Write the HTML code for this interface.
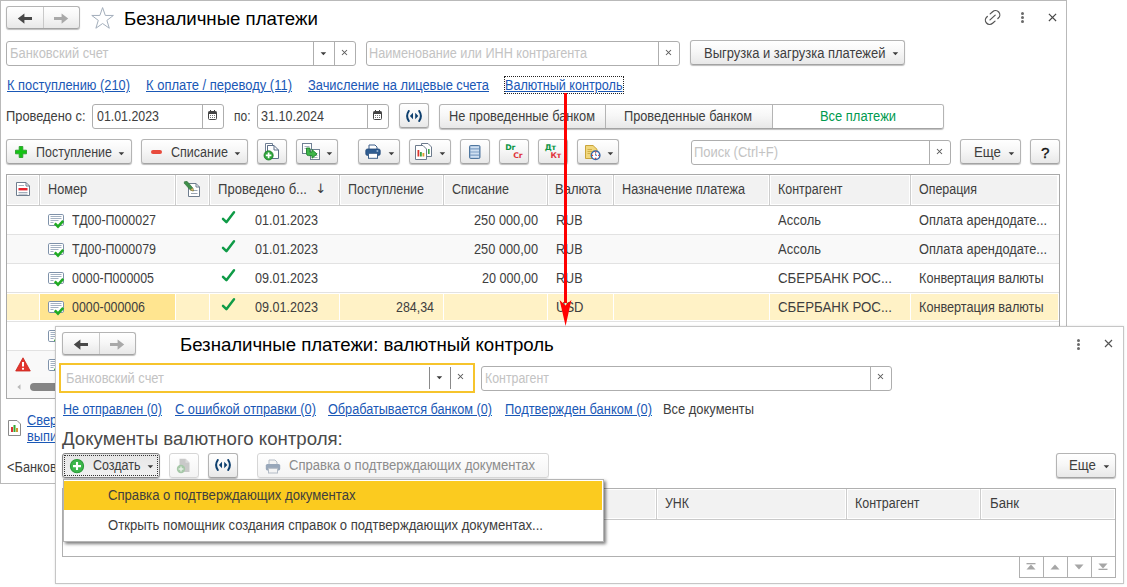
<!DOCTYPE html>
<html lang="ru"><head><meta charset="utf-8"><title>Безналичные платежи</title>
<style>
html,body{margin:0;padding:0}
body{width:1127px;height:587px;position:relative;overflow:hidden;background:#fff;font-family:"Liberation Sans",sans-serif;font-size:14px;color:#3e3e3e}
div,span.t,svg{position:absolute;box-sizing:border-box}
.t{white-space:nowrap;line-height:20px;transform-origin:0 50%}
.btn{border:1px solid #b4b4b4;border-bottom-color:#a3a3a3;border-radius:3px;background:linear-gradient(#fff 0%,#f7f7f7 45%,#e8e8e8 100%);box-shadow:0 1px 1px rgba(0,0,0,.26)}
.btn.dis{border-color:#d6d6d6;box-shadow:0 1px 0 rgba(0,0,0,.08);background:linear-gradient(#fff,#f3f3f3)}
.fld{border:1px solid #aeaeae;border-radius:3px;background:#fff}
.fld i{position:absolute;top:0;bottom:0;width:1px;background:#aeaeae}
.a{color:#1a58b6;text-decoration:underline}
.ph{color:#c3c3c3}
.win{background:#fff;border:1px solid #c4c4c4}
.hd{background:#f2f2f2}
.vl{background:#d9d9d9;width:1px}
.hl{background:#e3e3e3;height:1px}

</style></head>
<body>
<div style="left:0px;top:0px;width:1067px;height:484px;border:1px solid #b9b9b9;background:#fff"></div>
<div class="btn" style="left:6px;top:6px;width:74px;height:23px;"></div>
<div style="left:43px;top:7px;width:1px;height:21px;background:#c9c9c9"></div>
<svg style="left:17px;top:13px" width="16" height="12" viewBox="0 0 16 12"><path d="M0.8 5.6 L7.4 0.4 V4.1 H15 V7.1 H7.4 V10.8 Z" fill="#484848"/></svg>
<svg style="left:53px;top:13px" width="16" height="12" viewBox="0 0 16 12"><path d="M15.2 5.6 L8.6 0.4 V4.1 H1 V7.1 H8.600 V10.8 Z" fill="#a9a9a9"/></svg>
<svg style="left:89.700px;top:6.100px" width="25.200" height="24.230" viewBox="0 0 24 23.080"><path d="M12 1.500 L14.600 9 L22.300 9 L16.100 13.700 L18.400 21.200 L12 16.700 L5.600 21.200 L7.900 13.700 L1.700 9 L9.400 9 Z" fill="#fff" stroke="#a3aebb" stroke-width="0.95" stroke-linejoin="round"/></svg>
<span class="t" style="left:124px;top:9px;font-size:18.67px;color:#000;letter-spacing:-0.013px;">Безналичные платежи</span>
<svg style="left:982px;top:7px" width="21" height="21" viewBox="-10.5 -10.5 21 21" fill="none" stroke="#555" stroke-width="1.25" stroke-linecap="round"><g transform="translate(0.1,0) rotate(-42)"><path d="M0.600 -4.300 H3.900 A4.300 4.300 0 0 1 3.900 4.300 H3.200"/><path d="M-0.600 4.300 H-3.900 A4.300 4.300 0 0 1 -3.900 -4.300 H-3.200"/><path d="M-3.500 0 H3.500"/></g></svg>
<div style="left:1021px;top:12.0px;width:3px;height:3px;border-radius:50%;background:#6a6a6a"></div>
<div style="left:1021px;top:16.0px;width:3px;height:3px;border-radius:50%;background:#6a6a6a"></div>
<div style="left:1021px;top:20.0px;width:3px;height:3px;border-radius:50%;background:#6a6a6a"></div>
<svg style="left:1048px;top:13px" width="9" height="9" viewBox="0 0 9 9"><path d="M0.900 0.800 L8.1 8 M8.1 0.8 L0.9 8" stroke="#484848" stroke-width="1.15"/></svg>
<div class="fld" style="left:6px;top:41px;width:350px;height:25px;"><i style="left:306px"></i><i style="left:327px"></i></div>
<span class="t ph" style="left:10px;top:43px;transform:scaleX(0.9242);">Банковский счет</span>
<svg style="left:320px;top:52px" width="7" height="4" viewBox="0 0 7 4"><path d="M0.6 0.3 H6.2 L3.4 3.300 Z" fill="#3d3d3d"/></svg>
<svg style="left:341px;top:49px" width="7" height="7" viewBox="0 0 7 7"><path d="M1 1 L6 6 M6 1 L1 6" stroke="#5a5a5a" stroke-width="1.05"/></svg>
<div class="fld" style="left:366px;top:41px;width:314px;height:25px;"><i style="left:291px"></i></div>
<span class="t ph" style="left:369px;top:43px;transform:scaleX(0.9047);">Наименование или ИНН контрагента</span>
<svg style="left:665px;top:49px" width="7" height="7" viewBox="0 0 7 7"><path d="M1 1 L6 6 M6 1 L1 6" stroke="#5a5a5a" stroke-width="1.05"/></svg>
<div class="btn" style="left:690px;top:40px;width:215px;height:25px;"></div>
<span class="t" style="left:704px;top:43px;transform:scaleX(0.9264);">Выгрузка и загрузка платежей</span>
<svg style="left:892px;top:52px" width="7" height="4" viewBox="0 0 7 4"><path d="M0.6 0.3 H6.2 L3.4 3.300 Z" fill="#3d3d3d"/></svg>
<span class="t a" style="left:7px;top:75px;transform:scaleX(0.9169);">К поступлению (210)</span>
<span class="t a" style="left:146px;top:75px;transform:scaleX(0.9277);">К оплате / переводу (11)</span>
<span class="t a" style="left:308px;top:75px;transform:scaleX(0.9190);">Зачисление на лицевые счета</span>
<span class="t a" style="left:505px;top:75px;transform:scaleX(0.9015);">Валютный контроль</span>
<div style="left:504px;top:76px;width:120px;height:18px;border:1px dotted #222"></div>
<span class="t" style="left:6px;top:106px;transform:scaleX(0.9175);">Проведено с:</span>
<div class="fld" style="left:92px;top:104px;width:132px;height:25px;"><i style="left:109px"></i></div>
<span class="t" style="left:97px;top:106px;transform:scaleX(0.8848);">01.01.2023</span>
<div class="fld" style="left:257px;top:104px;width:132px;height:25px;"><i style="left:109px"></i></div>
<span class="t" style="left:234px;top:106px;transform:scaleX(0.8569);">по:</span>
<span class="t" style="left:261px;top:106px;transform:scaleX(0.8991);">31.10.2024</span>
<svg style="left:208px;top:110px" width="9" height="10" viewBox="0 0 9 10"><rect x="0.5" y="1.5" width="8" height="8" rx="1" fill="#fff" stroke="#444"/><rect x="0.5" y="1.5" width="8" height="2.5" fill="#444"/><path d="M2.5 0 V2 M6.5 0 V2" stroke="#444"/><path d="M2 5.5 H7 M2 7.5 H7" stroke="#777" stroke-dasharray="1 1"/></svg>
<svg style="left:373px;top:110px" width="9" height="10" viewBox="0 0 9 10"><rect x="0.5" y="1.5" width="8" height="8" rx="1" fill="#fff" stroke="#444"/><rect x="0.5" y="1.5" width="8" height="2.5" fill="#444"/><path d="M2.5 0 V2 M6.5 0 V2" stroke="#444"/><path d="M2 5.5 H7 M2 7.5 H7" stroke="#777" stroke-dasharray="1 1"/></svg>
<div class="btn" style="left:399px;top:103px;width:30px;height:25px;"></div>
<svg style="left:405px;top:110px" width="18" height="12" viewBox="0 0 18 12" fill="none" stroke="#0d3f6e" stroke-width="2" stroke-linecap="round"><path d="M3.8 1 Q0.4 6 3.8 11"/><path d="M14.2 1 Q17.6 6 14.200 11"/><path d="M8 2.7 V9.3 L4.9 6 Z M10.2 2.7 V9.3 L13.3 6 Z" fill="#0d3f6e" stroke="none"/></svg>
<div class="btn" style="left:439px;top:104px;width:505px;height:25px;"></div>
<div style="left:772px;top:105px;width:171px;height:23px;background:#fff;border-radius:0 2px 2px 0"></div>
<div style="left:605px;top:105px;width:1px;height:23px;background:#b4b4b4"></div>
<div style="left:772px;top:105px;width:1px;height:23px;background:#b4b4b4"></div>
<span class="t" style="left:449px;top:106px;transform:scaleX(0.9138);">Не проведенные банком</span>
<span class="t" style="left:624px;top:106px;transform:scaleX(0.9113);">Проведенные банком</span>
<span class="t" style="left:819.5px;top:106px;color:#009a4e;transform:scaleX(0.9233);">Все платежи</span>
<div class="btn" style="left:6px;top:139px;width:126px;height:25px;"></div>
<svg style="left:15px;top:146px" width="12" height="12" viewBox="0 0 12 12"><path d="M4.2 0.5 H7.8 V4.2 H11.5 V7.8 H7.8 V11.5 H4.2 V7.8 H0.5 V4.2 H4.2 Z" fill="#14c414" stroke="#2a9e2a" stroke-width="0.9"/></svg>
<span class="t" style="left:36px;top:142px;transform:scaleX(0.8910);">Поступление</span>
<svg style="left:118px;top:152px" width="7" height="4" viewBox="0 0 7 4"><path d="M0.6 0.3 H6.2 L3.4 3.300 Z" fill="#3d3d3d"/></svg>
<div class="btn" style="left:141px;top:139px;width:107px;height:25px;"></div>
<div style="left:151px;top:150px;width:11px;height:4px;background:#e84a3c;border-radius:2px"></div>
<span class="t" style="left:171px;top:142px;transform:scaleX(0.8957);">Списание</span>
<svg style="left:234px;top:152px" width="7" height="4" viewBox="0 0 7 4"><path d="M0.6 0.3 H6.2 L3.4 3.300 Z" fill="#3d3d3d"/></svg>
<div class="btn" style="left:257px;top:139px;width:30px;height:25px;"></div>
<div class="btn" style="left:296px;top:139px;width:42px;height:25px;"></div>
<svg style="left:326px;top:152px" width="7" height="4" viewBox="0 0 7 4"><path d="M0.6 0.3 H6.2 L3.4 3.300 Z" fill="#3d3d3d"/></svg>
<div class="btn" style="left:358px;top:139px;width:42px;height:25px;"></div>
<svg style="left:388px;top:152px" width="7" height="4" viewBox="0 0 7 4"><path d="M0.6 0.3 H6.2 L3.4 3.300 Z" fill="#3d3d3d"/></svg>
<div class="btn" style="left:409px;top:139px;width:42px;height:25px;"></div>
<svg style="left:439px;top:152px" width="7" height="4" viewBox="0 0 7 4"><path d="M0.6 0.3 H6.2 L3.4 3.300 Z" fill="#3d3d3d"/></svg>
<div class="btn" style="left:460px;top:139px;width:30px;height:25px;"></div>
<div class="btn" style="left:499px;top:139px;width:30px;height:25px;"></div>
<div class="btn" style="left:538px;top:139px;width:30px;height:25px;"></div>
<div class="btn" style="left:577px;top:139px;width:42px;height:25px;"></div>
<svg style="left:607px;top:152px" width="7" height="4" viewBox="0 0 7 4"><path d="M0.6 0.3 H6.2 L3.4 3.300 Z" fill="#3d3d3d"/></svg>
<div class="fld" style="left:691px;top:140px;width:260px;height:25px;"><i style="left:237px"></i></div>
<span class="t ph" style="left:694px;top:142px;transform:scaleX(0.9281);">Поиск (Ctrl+F)</span>
<svg style="left:936px;top:148px" width="7" height="7" viewBox="0 0 7 7"><path d="M1 1 L6 6 M6 1 L1 6" stroke="#5a5a5a" stroke-width="1.05"/></svg>
<div class="btn" style="left:960px;top:139px;width:61px;height:25px;"></div>
<span class="t" style="left:974px;top:142px;transform:scaleX(0.9478);">Еще</span>
<svg style="left:1008px;top:152px" width="7" height="4" viewBox="0 0 7 4"><path d="M0.6 0.3 H6.2 L3.4 3.300 Z" fill="#3d3d3d"/></svg>
<div class="btn" style="left:1030px;top:139px;width:30px;height:25px;"></div>
<span class="t" style="left:1041px;top:142.5px;font-size:15.2px;color:#111;-webkit-text-stroke:0.35px #111">?</span>
<svg style="left:263px;top:143px" width="17" height="18" viewBox="0 0 17 18"><path d="M2.5 0.5 H9.5 V3 H4.5 V13 H2.5 Z" fill="#fff" stroke="#6f7f93"/><path d="M4.5 2.5 H11 L15.5 7 V15.5 H4.5 Z" fill="#fff" stroke="#5c6f88"/><path d="M11 2.5 V7 H15.5" fill="none" stroke="#5c6f88"/><circle cx="5.6" cy="12.4" r="4.6" fill="#2ea63a" stroke="#187a25" stroke-width="0.8"/><path d="M5.6 9.6 V15.2 M2.8 12.4 H8.4" stroke="#fff" stroke-width="1.7"/></svg>
<svg style="left:302px;top:143px" width="18" height="17" viewBox="0 0 18 17"><rect x="0.5" y="0.5" width="9" height="10" fill="#fff" stroke="#6f7f93"/><path d="M2.5 3.5 H7.5 M2.5 5.5 H7.5" stroke="#a9b3bf"/><rect x="8.5" y="6.5" width="9" height="10" fill="#fff" stroke="#6f7f93"/><path d="M11 10.5 H15.500 M11 12.5 H15.5 M11 14.5 H15.5" stroke="#a9b3bf"/><path d="M4.5 5 H7.8 V9 H10 V6.6 L15 11 L10 15.2 V12.6 H6.5 Q4.5 12.6 4.5 10.6 Z" fill="#3fb54a" stroke="#1c7f2b" stroke-width="0.9" stroke-linejoin="round"/></svg>
<svg style="left:365px;top:144px" width="16" height="15" viewBox="0 0 16 15"><path d="M4 5 V1 H10 L12 3 V5" fill="#fff" stroke="#3c5f8a"/><rect x="0.8" y="5" width="14.4" height="6.4" rx="1.6" fill="#2f5d92" stroke="#244a78" stroke-width="0.8"/><rect x="3.5" y="9.3" width="9" height="5" fill="#fff" stroke="#3c5f8a"/><rect x="11.6" y="6.4" width="1.6" height="1.2" fill="#cfe0f2"/></svg>
<svg style="left:415px;top:143px" width="18" height="17" viewBox="0 0 18 17"><path d="M6.500 0.5 H13 L16.5 4 V13.5 H6.5 Z" fill="#fff" stroke="#6c7a8c"/><path d="M0.500 2.5 H8 L11.5 6 V16.5 H0.5 Z" fill="#fff" stroke="#6c7a8c"/><rect x="13" y="6" width="1.600" height="5" fill="#3aa444"/><rect x="2.5" y="7" width="1.800" height="6.500" fill="#d9342b"/><rect x="5" y="9" width="1.800" height="4.500" fill="#3aa444"/><rect x="7.500" y="10" width="1.800" height="3.500" fill="#e39b2d"/></svg>
<svg style="left:469px;top:145px" width="12" height="14" viewBox="0 0 12 14"><rect x="0.500" y="0.5" width="10.500" height="13" rx="1.200" fill="#7c9fc4" stroke="#50779f"/><path d="M1.500 2.300 H10 M1.5 5.400 H10 M1.5 8.600 H10 M1.5 11.700 H10" stroke="#cfe0f1" stroke-width="2"/></svg>
<span class="t" style="left:505.300px;top:140.300px;font:bold 7.800px/16px 'DejaVu Sans',sans-serif;color:#0b9443;letter-spacing:-0.150px">Dr</span>
<span class="t" style="left:513.300px;top:147.900px;font:bold 7.800px/16px 'DejaVu Sans',sans-serif;color:#e0333b;letter-spacing:-0.150px">Cr</span>
<span class="t" style="left:544.800px;top:140.300px;font:bold 7.800px/16px 'DejaVu Sans',sans-serif;color:#0b9443;letter-spacing:-0.200px">Дт</span>
<span class="t" style="left:550.600px;top:147.900px;font:bold 7.800px/16px 'DejaVu Sans',sans-serif;color:#e0333b;letter-spacing:-0.200px">Кт</span>
<svg style="left:584px;top:145px" width="18" height="16" viewBox="0 0 18 16"><path d="M1.500 0.5 H9 L13 4.300 V13.500 H1.5 Z" fill="#f1d77c" stroke="#c9a43a"/><path d="M3.500 4.500 H8 M3.5 6.500 H8 M3.5 8.500 H6.500" stroke="#c9a43a" stroke-width="0.8"/><circle cx="11.600" cy="10.300" r="4.300" fill="#fff" stroke="#3566a8" stroke-width="1.5"/><path d="M11.6 6.600 V7.800 M11.6 12.800 V14 M7.900 10.3 H9.100 M14.100 10.3 H15.300" stroke="#e03a30" stroke-width="1.3"/><path d="M11.6 8.300 V10.3 H13" fill="none" stroke="#3566a8" stroke-width="0.9"/></svg>
<div style="left:6px;top:174px;width:1054px;height:225px;border:1px solid #a9a9a9;background:#fff"></div>
<div style="left:8px;top:176px;width:1049px;height:28px;background:#f2f2f2"></div>
<div style="left:7px;top:205px;width:1052px;height:1px;background:#c9c9c9"></div>
<div style="left:38px;top:175px;width:3px;height:30px;background:#fff"></div>
<div style="left:39px;top:175px;width:1px;height:30px;background:#cdcdcd"></div>
<div style="left:174px;top:175px;width:3px;height:30px;background:#fff"></div>
<div style="left:175px;top:175px;width:1px;height:30px;background:#cdcdcd"></div>
<div style="left:208px;top:175px;width:3px;height:30px;background:#fff"></div>
<div style="left:209px;top:175px;width:1px;height:30px;background:#cdcdcd"></div>
<div style="left:338px;top:175px;width:3px;height:30px;background:#fff"></div>
<div style="left:339px;top:175px;width:1px;height:30px;background:#cdcdcd"></div>
<div style="left:442px;top:175px;width:3px;height:30px;background:#fff"></div>
<div style="left:443px;top:175px;width:1px;height:30px;background:#cdcdcd"></div>
<div style="left:546px;top:175px;width:3px;height:30px;background:#fff"></div>
<div style="left:547px;top:175px;width:1px;height:30px;background:#cdcdcd"></div>
<div style="left:612px;top:175px;width:3px;height:30px;background:#fff"></div>
<div style="left:613px;top:175px;width:1px;height:30px;background:#cdcdcd"></div>
<div style="left:768px;top:175px;width:3px;height:30px;background:#fff"></div>
<div style="left:769px;top:175px;width:1px;height:30px;background:#cdcdcd"></div>
<div style="left:909px;top:175px;width:3px;height:30px;background:#fff"></div>
<div style="left:910px;top:175px;width:1px;height:30px;background:#cdcdcd"></div>
<svg style="left:16px;top:182px" width="15" height="15" viewBox="0 0 15 15"><path d="M0.500 0.5 H10 L13.500 4 V13.500 H0.5 Z" fill="#fff" stroke="#6f7d8e"/><path d="M10 0.5 V4 H13.5" fill="none" stroke="#6f7d8e"/><path d="M2.500 3.500 H8 M2.5 10.500 H11.500 M2.5 12.200 H11.500" stroke="#9aa5b3" stroke-width="0.9"/><rect x="2.500" y="6" width="9" height="2.400" fill="#e8212b"/></svg>
<svg style="left:183px;top:181px" width="18" height="16" viewBox="0 0 18 16"><path d="M5.500 2.500 H13 L16.500 6 V15.500 H5.5 Z" fill="#fff" stroke="#6f7d8e"/><path d="M13 2.5 V6 H16.5" fill="none" stroke="#6f7d8e"/><path d="M8 9.500 H14.500 M8 12.500 H14.5" stroke="#9aa5b3"/><path d="M1.300 0.800 L4 0.300 L9.800 7 L10.300 10 L7.300 9 L1.300 2.300 Z" fill="#3f8f4a" stroke="#2c6c36" stroke-width="0.6"/><path d="M7.3 9 L10.3 10 L9.800 7 Z" fill="#f2c879" stroke="#9b7a3a" stroke-width="0.5"/></svg>
<span class="t" style="left:48px;top:179px;transform:scaleX(0.9050);">Номер</span>
<span class="t" style="left:218px;top:179px;transform:scaleX(0.9325);">Проведено б...</span>
<span class="t" style="left:315.3px;top:179px;font-size:13px;font-family:'DejaVu Sans',sans-serif">↓</span>
<span class="t" style="left:348px;top:179px;transform:scaleX(0.8910);">Поступление</span>
<span class="t" style="left:452px;top:179px;transform:scaleX(0.8957);">Списание</span>
<span class="t" style="left:555px;top:179px;transform:scaleX(0.9288);">Валюта</span>
<span class="t" style="left:622px;top:179px;transform:scaleX(0.9048);">Назначение платежа</span>
<span class="t" style="left:778px;top:179px;transform:scaleX(0.8910);">Контрагент</span>
<span class="t" style="left:919px;top:179px;transform:scaleX(0.8889);">Операция</span>
<div style="left:7px;top:206px;width:1052px;height:28px;background:#fff"></div>
<div style="left:7px;top:234px;width:1052px;height:1px;background:#e2e2e2"></div>
<svg style="left:48px;top:214px" width="17" height="15" viewBox="0 0 17 15"><rect x="0.5" y="0.5" width="15" height="11" rx="1.3" fill="#fff" stroke="#7f92aa"/><path d="M2.5 2.500 H13.5 M2.5 4.500 H13.5 M2.5 6.500 H10.5 M2.5 8.500 H5.500" stroke="#a3b1c2"/><path d="M6.800 9.300 L10 12.600 L15.2 6.900" fill="none" stroke="#1fab22" stroke-width="2.6"/></svg>
<span class="t" style="left:72px;top:210px;transform:scaleX(0.8881);">ТД00-П000027</span>
<svg style="left:221px;top:210px" width="16" height="15" viewBox="0 0 16 15"><path d="M2 8.800 L5.400 12.200 L13 2.300" fill="none" stroke="#0f9b47" stroke-width="2.500" stroke-linecap="round" stroke-linejoin="round"/></svg>
<span class="t" style="left:255px;top:210px;transform:scaleX(0.8991);">01.01.2023</span>
<span class="t" style="left:474px;top:210px;transform:scaleX(0.9134);">250 000,00</span>
<span class="t" style="left:555.5px;top:210px;transform:scaleX(0.8965);">RUB</span>
<span class="t" style="left:778px;top:210px;transform:scaleX(0.9260);">Ассоль</span>
<span class="t" style="left:919px;top:210px;transform:scaleX(0.9133);">Оплата арендодате...</span>
<div style="left:7px;top:235px;width:1052px;height:28px;background:#f9f9f9"></div>
<div style="left:7px;top:263px;width:1052px;height:1px;background:#e2e2e2"></div>
<svg style="left:48px;top:243px" width="17" height="15" viewBox="0 0 17 15"><rect x="0.5" y="0.5" width="15" height="11" rx="1.3" fill="#fff" stroke="#7f92aa"/><path d="M2.5 2.500 H13.5 M2.5 4.500 H13.5 M2.5 6.500 H10.5 M2.5 8.500 H5.500" stroke="#a3b1c2"/><path d="M6.800 9.300 L10 12.600 L15.2 6.900" fill="none" stroke="#1fab22" stroke-width="2.6"/></svg>
<span class="t" style="left:72px;top:239px;transform:scaleX(0.8881);">ТД00-П000079</span>
<svg style="left:221px;top:239px" width="16" height="15" viewBox="0 0 16 15"><path d="M2 8.800 L5.400 12.200 L13 2.300" fill="none" stroke="#0f9b47" stroke-width="2.500" stroke-linecap="round" stroke-linejoin="round"/></svg>
<span class="t" style="left:255px;top:239px;transform:scaleX(0.8991);">01.01.2023</span>
<span class="t" style="left:474px;top:239px;transform:scaleX(0.9134);">250 000,00</span>
<span class="t" style="left:555.5px;top:239px;transform:scaleX(0.8965);">RUB</span>
<span class="t" style="left:778px;top:239px;transform:scaleX(0.9260);">Ассоль</span>
<span class="t" style="left:919px;top:239px;transform:scaleX(0.9133);">Оплата арендодате...</span>
<div style="left:7px;top:264px;width:1052px;height:28px;background:#fff"></div>
<div style="left:7px;top:292px;width:1052px;height:1px;background:#e2e2e2"></div>
<svg style="left:48px;top:272px" width="17" height="15" viewBox="0 0 17 15"><rect x="0.5" y="0.5" width="15" height="11" rx="1.3" fill="#fff" stroke="#7f92aa"/><path d="M2.5 2.500 H13.5 M2.5 4.500 H13.5 M2.5 6.500 H10.5 M2.5 8.500 H5.500" stroke="#a3b1c2"/><path d="M6.800 9.300 L10 12.600 L15.2 6.900" fill="none" stroke="#1fab22" stroke-width="2.6"/></svg>
<span class="t" style="left:72px;top:268px;transform:scaleX(0.8856);">0000-П000005</span>
<svg style="left:221px;top:268px" width="16" height="15" viewBox="0 0 16 15"><path d="M2 8.800 L5.400 12.200 L13 2.300" fill="none" stroke="#0f9b47" stroke-width="2.500" stroke-linecap="round" stroke-linejoin="round"/></svg>
<span class="t" style="left:255px;top:268px;transform:scaleX(0.8991);">09.01.2023</span>
<span class="t" style="left:482px;top:268px;transform:scaleX(0.8991);">20 000,00</span>
<span class="t" style="left:555.5px;top:268px;transform:scaleX(0.8965);">RUB</span>
<span class="t" style="left:778px;top:268px;transform:scaleX(0.9496);">СБЕРБАНК РОС...</span>
<span class="t" style="left:919px;top:268px;transform:scaleX(0.9056);">Конвертация валюты</span>
<div style="left:7px;top:293px;width:1052px;height:28px;background:#f9f9f9"></div>
<div style="left:7px;top:321px;width:1052px;height:1px;background:#e2e2e2"></div>
<div style="left:7px;top:293px;width:1052px;height:28px;background:#fff"></div>
<div style="left:7px;top:294px;width:1051px;height:26px;background:#fff2c6"></div>
<div style="left:40px;top:294px;width:135px;height:26px;background:#ffe590"></div>
<div style="left:39px;top:294px;width:1px;height:26px;background:#fff"></div>
<div style="left:175px;top:294px;width:1px;height:26px;background:#fff"></div>
<div style="left:209px;top:294px;width:1px;height:26px;background:#fff"></div>
<div style="left:339px;top:294px;width:1px;height:26px;background:#fff"></div>
<div style="left:443px;top:294px;width:1px;height:26px;background:#fff"></div>
<div style="left:547px;top:294px;width:1px;height:26px;background:#fff"></div>
<div style="left:613px;top:294px;width:1px;height:26px;background:#fff"></div>
<div style="left:769px;top:294px;width:1px;height:26px;background:#fff"></div>
<div style="left:910px;top:294px;width:1px;height:26px;background:#fff"></div>
<svg style="left:48px;top:301px" width="17" height="15" viewBox="0 0 17 15"><rect x="0.5" y="0.5" width="15" height="11" rx="1.3" fill="#fff" stroke="#7f92aa"/><path d="M2.5 2.500 H13.5 M2.5 4.500 H13.5 M2.5 6.500 H10.5 M2.5 8.500 H5.500" stroke="#a3b1c2"/><path d="M6.800 9.300 L10 12.600 L15.2 6.900" fill="none" stroke="#1fab22" stroke-width="2.6"/></svg>
<span class="t" style="left:72px;top:297px;transform:scaleX(0.8846);">0000-000006</span>
<svg style="left:221px;top:297px" width="16" height="15" viewBox="0 0 16 15"><path d="M2 8.800 L5.400 12.200 L13 2.300" fill="none" stroke="#0f9b47" stroke-width="2.500" stroke-linecap="round" stroke-linejoin="round"/></svg>
<span class="t" style="left:255px;top:297px;transform:scaleX(0.8991);">09.01.2023</span>
<span class="t" style="left:396px;top:297px;transform:scaleX(0.8874);">284,34</span>
<span class="t" style="left:555.5px;top:297px;transform:scaleX(0.9303);">USD</span>
<span class="t" style="left:778px;top:297px;transform:scaleX(0.9496);">СБЕРБАНК РОС...</span>
<span class="t" style="left:919px;top:297px;transform:scaleX(0.9056);">Конвертация валюты</span>
<div style="left:7px;top:322px;width:1052px;height:28px;background:#fff"></div>
<div style="left:7px;top:350px;width:1052px;height:1px;background:#e2e2e2"></div>
<svg style="left:48px;top:330px" width="17" height="15" viewBox="0 0 17 15"><rect x="0.5" y="0.5" width="15" height="11" rx="1.3" fill="#fff" stroke="#7f92aa"/><path d="M2.5 2.500 H13.5 M2.5 4.500 H13.5 M2.5 6.500 H10.5 M2.5 8.500 H5.500" stroke="#a3b1c2"/><path d="M6.800 9.300 L10 12.600 L15.2 6.900" fill="none" stroke="#1fab22" stroke-width="2.6"/></svg>
<div style="left:7px;top:351px;width:1052px;height:26px;background:#f9f9f9"></div>
<svg style="left:48px;top:359px" width="17" height="15" viewBox="0 0 17 15"><rect x="0.5" y="0.5" width="15" height="11" rx="1.3" fill="#fff" stroke="#7f92aa"/><path d="M2.5 2.500 H13.5 M2.5 4.500 H13.5 M2.5 6.500 H10.5 M2.5 8.500 H5.500" stroke="#a3b1c2"/><path d="M6.800 9.300 L10 12.600 L15.2 6.900" fill="none" stroke="#1fab22" stroke-width="2.6"/></svg>
<svg style="left:15px;top:357px" width="16" height="15" viewBox="0 0 16 15"><path d="M8 0.8 L15.3 14 H0.7 Z" fill="#e2352d" stroke="#c9241d" stroke-width="0.8" stroke-linejoin="round"/><path d="M8 5 V9.6" stroke="#fff" stroke-width="2"/><circle cx="8" cy="11.8" r="1.1" fill="#fff"/></svg>
<div style="left:7px;top:377px;width:1052px;height:21px;background:#f8f8f8"></div>
<svg style="left:17px;top:384px" width="4" height="6" viewBox="0 0 4 6"><path d="M3.5 0.3 V5.7 L0.3 3 Z" fill="#b9b9b9"/></svg>
<div style="left:30px;top:383px;width:300px;height:8px;background:#858585;border-radius:4px"></div>
<svg style="left:8px;top:420px" width="13" height="16" viewBox="0 0 13 16"><path d="M0.5 0.5 H9 L12.5 4 V15.5 H0.5 Z" fill="#fff" stroke="#8a8a8a"/><rect x="3" y="7" width="2" height="5" fill="#d33"/><rect x="5.5" y="5" width="2" height="7" fill="#3a3"/><rect x="8" y="8" width="2" height="4" fill="#c93"/></svg>
<span class="t a" style="left:27px;top:410px;transform:scaleX(.915);">Сверка с банком</span>
<span class="t a" style="left:27px;top:426px;transform:scaleX(.915);">выписок банка</span>
<span class="t" style="left:7px;top:457px;transform:scaleX(.915);">&lt;Банковский счет не выбран&gt;</span>
<div style="left:564px;top:93px;width:3px;height:210px;background:#ff0000"></div>
<svg style="left:558px;top:298px" width="16" height="29" viewBox="0 0 16 29"><path d="M1.6 2 L7.5 7.5 L13.4 2 L7.6 28 Z" fill="#ff0000"/></svg>
<div style="left:55px;top:326px;width:1069px;height:258px;border:1px solid #c6c6c6;background:#fff;box-shadow:0 0 2px rgba(0,0,0,.12)"></div>
<div class="btn" style="left:62px;top:332px;width:74px;height:23px;"></div>
<div style="left:99px;top:333px;width:1px;height:21px;background:#c9c9c9"></div>
<svg style="left:73px;top:339px" width="16" height="12" viewBox="0 0 16 12"><path d="M0.8 5.6 L7.4 0.4 V4.1 H15 V7.1 H7.4 V10.8 Z" fill="#484848"/></svg>
<svg style="left:109px;top:339px" width="16" height="12" viewBox="0 0 16 12"><path d="M15.2 5.6 L8.6 0.4 V4.1 H1 V7.1 H8.600 V10.8 Z" fill="#a9a9a9"/></svg>
<span class="t" style="left:180px;top:335px;font-size:18.67px;color:#000;letter-spacing:-0.045px;">Безналичные платежи: валютный контроль</span>
<div style="left:1077px;top:339.0px;width:3px;height:3px;border-radius:50%;background:#6a6a6a"></div>
<div style="left:1077px;top:343.0px;width:3px;height:3px;border-radius:50%;background:#6a6a6a"></div>
<div style="left:1077px;top:347.0px;width:3px;height:3px;border-radius:50%;background:#6a6a6a"></div>
<svg style="left:1104px;top:339px" width="9" height="9" viewBox="0 0 9 9"><path d="M1 1 L8 8 M8 1 L1 8" stroke="#555" stroke-width="1.2"/></svg>
<div style="left:59px;top:363px;width:416px;height:30px;border:2px solid #f6c42c;background:#fff"></div>
<div style="left:429px;top:367px;width:1px;height:22px;background:#8a8a8a"></div>
<div style="left:450px;top:367px;width:1px;height:22px;background:#8a8a8a"></div>
<span class="t ph" style="left:65.5px;top:368px;transform:scaleX(0.9195);">Банковский счет</span>
<svg style="left:436px;top:376px" width="7" height="4" viewBox="0 0 7 4"><path d="M0.6 0.3 H6.2 L3.4 3.300 Z" fill="#3d3d3d"/></svg>
<svg style="left:457px;top:373px" width="7" height="7" viewBox="0 0 7 7"><path d="M1 1 L6 6 M6 1 L1 6" stroke="#5a5a5a" stroke-width="1.05"/></svg>
<div class="fld" style="left:481px;top:366px;width:411px;height:25px;"><i style="left:388px"></i></div>
<span class="t ph" style="left:485px;top:368px;transform:scaleX(0.8841);">Контрагент</span>
<svg style="left:877px;top:373px" width="7" height="7" viewBox="0 0 7 7"><path d="M1 1 L6 6 M6 1 L1 6" stroke="#5a5a5a" stroke-width="1.05"/></svg>
<span class="t a" style="left:63px;top:399px;transform:scaleX(0.8948);">Не отправлен (0)</span>
<span class="t a" style="left:175px;top:399px;transform:scaleX(0.9152);">С ошибкой отправки (0)</span>
<span class="t a" style="left:328px;top:399px;transform:scaleX(0.9053);">Обрабатывается банком (0)</span>
<span class="t a" style="left:504.5px;top:399px;transform:scaleX(0.9197);">Подтвержден банком (0)</span>
<span class="t" style="left:663px;top:399px;transform:scaleX(0.9219);">Все документы</span>
<span class="t" style="left:62px;top:429px;font-size:18.67px;color:#4a4a4a;letter-spacing:-0.014px;">Документы валютного контроля:</span>
<div class="btn" style="left:62px;top:453px;width:98px;height:25px;border-color:#858585;background:linear-gradient(#e6e6e6,#f1f1f1)"></div>
<div style="left:64px;top:455px;width:94px;height:21px;border:1px dotted #333"></div>
<svg style="left:69px;top:458px" width="16" height="16" viewBox="0 0 16 16"><circle cx="8" cy="8.100" r="6.600" fill="#3db74b" stroke="#2c9c3a" stroke-width="1.1"/><path d="M8 4.100 V12.100 M4 8.100 H12" stroke="#fff" stroke-width="2.1"/></svg>
<span class="t" style="left:92.5px;top:455px;transform:scaleX(0.8927);">Создать</span>
<svg style="left:147px;top:465px" width="7" height="4" viewBox="0 0 7 4"><path d="M0.6 0.3 H6.2 L3.4 3.300 Z" fill="#3d3d3d"/></svg>
<div class="btn dis" style="left:169px;top:453px;width:30px;height:25px;"></div>
<svg style="left:176px;top:458px" width="15" height="16" viewBox="0 0 15 16"><path d="M3.500 0.800 H9.500 L13.500 4.800 V14 H3.5 Z" fill="#c9c9c9"/><path d="M9.5 0.8 V4.8 H13.5 Z" fill="#dcdcdc"/><circle cx="5" cy="11" r="4.200" fill="#a6c8a8"/><path d="M5 8.600 V13.400 M2.600 11 H7.400" stroke="#e6f0e6" stroke-width="1.4"/></svg>
<div class="btn" style="left:208px;top:453px;width:30px;height:25px;"></div>
<svg style="left:214px;top:459px" width="18" height="12" viewBox="0 0 18 12" fill="none" stroke="#0d3f6e" stroke-width="2" stroke-linecap="round"><path d="M3.8 1 Q0.4 6 3.8 11"/><path d="M14.2 1 Q17.6 6 14.200 11"/><path d="M8 2.7 V9.3 L4.9 6 Z M10.2 2.7 V9.3 L13.3 6 Z" fill="#0d3f6e" stroke="none"/></svg>
<div class="btn dis" style="left:257px;top:453px;width:292px;height:25px;"></div>
<svg style="left:265px;top:459px" width="16" height="15" viewBox="0 0 16 15"><path d="M4 5 V1 H10 L12 3 V5" fill="#f4f4f4" stroke="#b4bcc6"/><rect x="0.800" y="5" width="14.400" height="6.400" rx="1.600" fill="#98a7ba"/><rect x="3.500" y="9.300" width="9" height="4.700" fill="#f4f4f4" stroke="#b4bcc6"/></svg>
<span class="t" style="left:288.5px;top:455px;color:#8c8c8c;transform:scaleX(0.9308);">Справка о подтверждающих документах</span>
<div class="btn" style="left:1056px;top:453px;width:60px;height:25px;"></div>
<span class="t" style="left:1069px;top:455px;transform:scaleX(0.9478);">Еще</span>
<svg style="left:1103px;top:465px" width="7" height="4" viewBox="0 0 7 4"><path d="M0.6 0.3 H6.2 L3.4 3.300 Z" fill="#3d3d3d"/></svg>
<div style="left:62px;top:488px;width:1054px;height:69px;border:1px solid #b0b0b0;background:#fff"></div>
<div style="left:64px;top:490px;width:1050px;height:28px;background:#f2f2f2"></div>
<div style="left:63px;top:519px;width:1052px;height:1px;background:#c9c9c9"></div>
<div style="left:655px;top:489px;width:3px;height:30px;background:#fff"></div>
<div style="left:656px;top:489px;width:1px;height:30px;background:#cdcdcd"></div>
<div style="left:845px;top:489px;width:3px;height:30px;background:#fff"></div>
<div style="left:846px;top:489px;width:1px;height:30px;background:#cdcdcd"></div>
<div style="left:979px;top:489px;width:3px;height:30px;background:#fff"></div>
<div style="left:980px;top:489px;width:1px;height:30px;background:#cdcdcd"></div>
<span class="t" style="left:665px;top:493px;transform:scaleX(0.8837);">УНК</span>
<span class="t" style="left:855px;top:493px;transform:scaleX(0.8910);">Контрагент</span>
<span class="t" style="left:989.5px;top:493px;transform:scaleX(0.9406);">Банк</span>
<div style="left:1019px;top:556px;width:97px;height:22px;border:1px solid #b0b0b0;background:#fff"></div>
<div style="left:1043px;top:557px;width:1px;height:20px;background:#b0b0b0"></div>
<div style="left:1067px;top:557px;width:1px;height:20px;background:#b0b0b0"></div>
<div style="left:1091px;top:557px;width:1px;height:20px;background:#b0b0b0"></div>
<svg style="left:1026px;top:563px" width="10" height="7" viewBox="0 0 10 7"><path d="M0.5 0.5 H9.5" stroke="#a6a6a6" stroke-width="1.6"/><path d="M5 1.5 L9.5 6.5 H0.5 Z" fill="#a6a6a6"/></svg>
<svg style="left:1050px;top:564px" width="10" height="7" viewBox="0 0 10 7"><path d="M5 0.5 L9.5 5.5 H0.5 Z" fill="#a6a6a6"/></svg>
<svg style="left:1074px;top:564px" width="10" height="7" viewBox="0 0 10 7"><path d="M5 5.5 L9.5 0.5 H0.5 Z" fill="#a6a6a6"/></svg>
<svg style="left:1098px;top:563px" width="10" height="7" viewBox="0 0 10 7"><path d="M0.5 6.5 H9.5" stroke="#a6a6a6" stroke-width="1.6"/><path d="M5 5.5 L9.5 0.5 H0.5 Z" fill="#a6a6a6"/></svg>
<div style="left:63px;top:479px;width:541px;height:63px;border:1px solid #b5b5b5;background:#fff;box-shadow:2px 2px 3px rgba(0,0,0,.5)"></div>
<div style="left:64px;top:481px;width:538px;height:29px;background:#fbcb1f"></div>
<span class="t" style="left:107.5px;top:485px;transform:scaleX(0.9365);">Справка о подтверждающих документах</span>
<span class="t" style="left:107.5px;top:515px;transform:scaleX(0.9355);">Открыть помощник создания справок о подтверждающих документах...</span>
</body></html>
